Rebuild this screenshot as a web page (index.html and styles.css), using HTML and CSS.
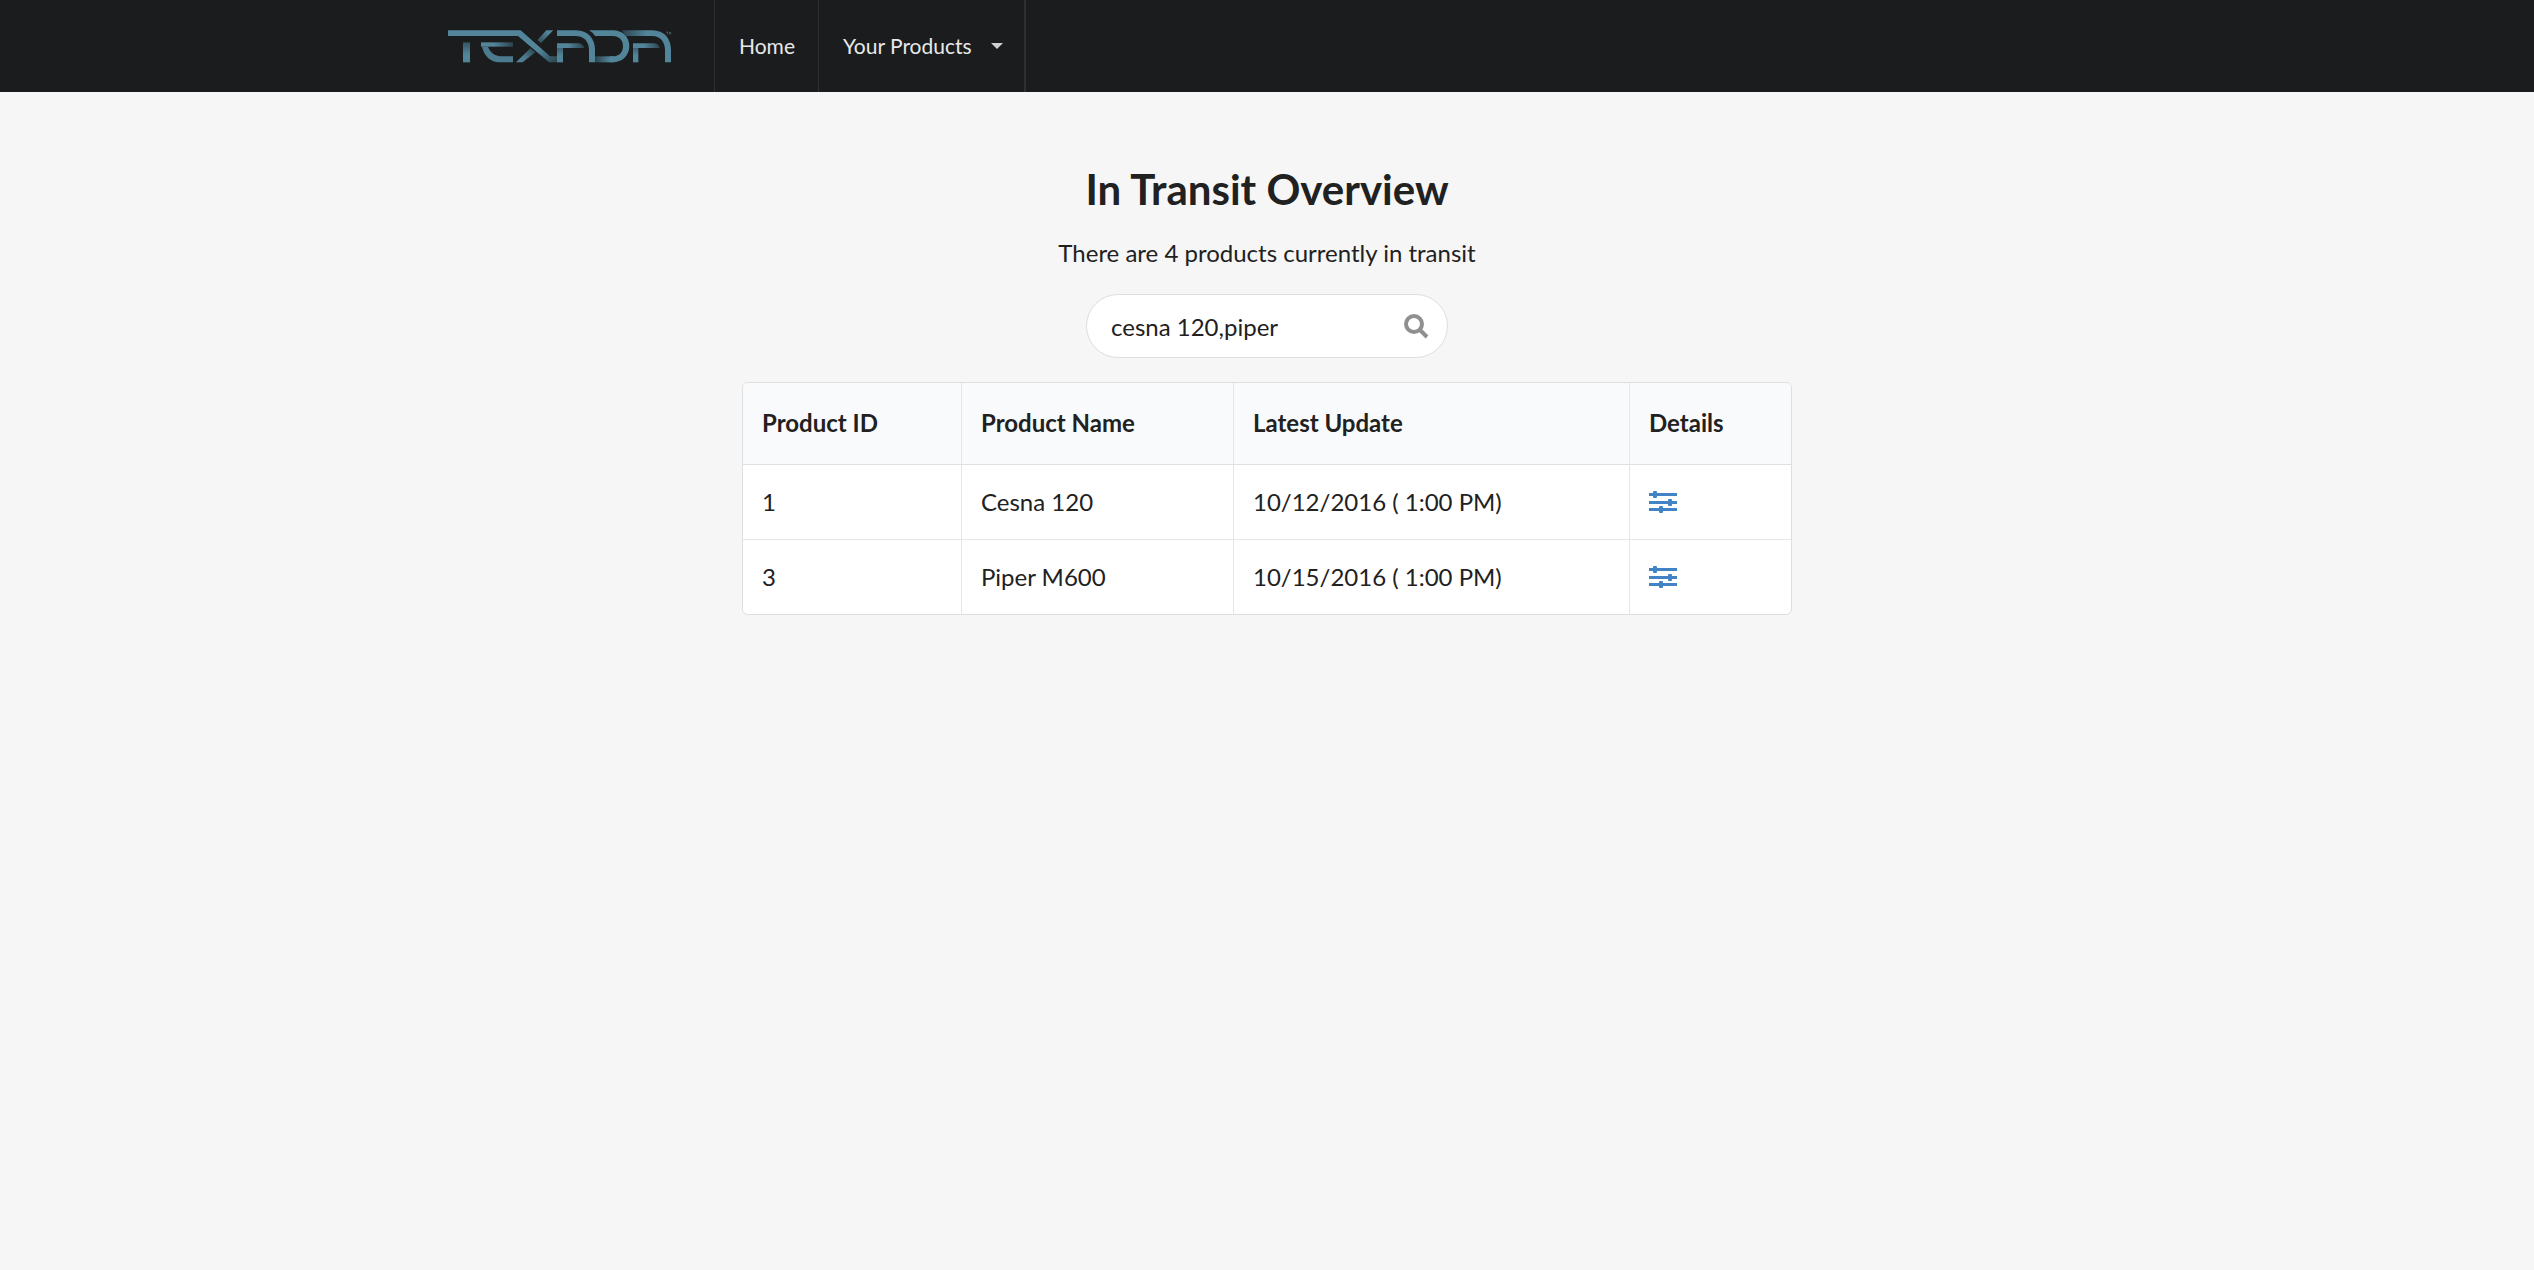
FILE: index.html
```html
<!DOCTYPE html>
<html lang="en">
<head>
<meta charset="utf-8">
<meta name="viewport" content="width=device-width, initial-scale=1">
<title>In Transit Overview</title>
<link rel="stylesheet" href="styles.css">
</head>
<body>
<header class="topbar">
  <nav class="menu" aria-label="Main">
    <a class="item brand" href="#" aria-label="Texada">
      <svg class="logo" viewBox="54 59 672 99" aria-hidden="true">
        <defs>
          <linearGradient id="down" x1="0" y1="0" x2="0" y2="1"><stop offset="0" stop-color="#355562"/><stop offset=".6" stop-color="#52849a"/></linearGradient>
          <linearGradient id="fadeRight" x1="0" y1="0" x2="1" y2="0"><stop offset=".4" stop-color="#52849a"/><stop offset="1" stop-color="#2c444e"/></linearGradient>
          <linearGradient id="fadeLeft" x1="0" y1="0" x2="1" y2="0"><stop offset="0" stop-color="#2b424b"/><stop offset=".8" stop-color="#52849a"/></linearGradient>
          <linearGradient id="cross" gradientUnits="userSpaceOnUse" x1="265" y1="60" x2="370" y2="157"><stop offset=".6" stop-color="#52849a"/><stop offset="1" stop-color="#2f4a55"/></linearGradient>
          <linearGradient id="rise" gradientUnits="userSpaceOnUse" x1="260" y1="156" x2="368" y2="60"><stop offset="0" stop-color="#52849a"/><stop offset=".2" stop-color="#4c7b8f"/><stop offset=".45" stop-color="#2b4751"/><stop offset=".65" stop-color="#35535f"/><stop offset=".9" stop-color="#52849a"/></linearGradient>
        </defs>
        <path fill="url(#down)" d="M99 96h21v60H99z"/>
        <path fill="url(#fadeRight)" d="M153 96h96v13h-96z"/>
        <path fill="#4c7b8f" d="M156 109h18q8 24 34 29h41v18h-45q-38-6-48-47z"/>
        <path fill="url(#rise)" d="M258 156L301 114l15 12-38 30zM322 89L349 60h21l-37 38z"/>
        <path fill="url(#cross)" d="M54 60h218l88 78h22v18h-25L264 77H54z"/>
        <path fill="#52849a" d="M381 60h57c36 0 57 25 57 58v38h-18v-37c0-25-15-42-40-42h-56z"/>
        <path fill="url(#down)" d="M381 105h18v51h-18z"/>
        <path fill="url(#fadeRight)" d="M381 99h65q13 2 17 14h-82z"/>
        <path fill="url(#fadeLeft)" d="M575 60h92v17h-80z"/>
        <path fill="#52849a" d="M477 60h71c30 0 50 20 50 47 0 28-21 49-50 49h-8v-18h8c20 0 31-13 31-31 0-17-12-30-31-30h-53q-4-9-18-17z"/>
        <path fill="url(#fadeLeft)" d="M495 138h56v18h-56z"/>
        <path fill="#52849a" d="M666 60h1c36 0 56 25 56 58v38h-18v-37c0-25-15-42-39-42z"/>
        <path fill="url(#down)" d="M609 105h16v51h-16z"/>
        <path fill="url(#fadeRight)" d="M609 99h64q13 2 17 14h-81z"/>
        <path fill="none" stroke="#52727e" stroke-width="2" d="M709 65h6M712 65v7M718 72v-6l2 3 2-3v6"/>
      </svg>
    </a>
    <a class="item" href="#">Home</a>
    <button class="item dropdown" type="button" aria-haspopup="true">Your Products
      <svg class="caret" viewBox="0 0 12 6" aria-hidden="true"><path d="M0 0h12L6 6z"/></svg>
    </button>
  </nav>
</header>

<main class="page">
  <h1>In Transit Overview</h1>
  <p class="summary">There are 4 products currently in transit</p>
  <form class="search" role="search">
    <input type="text" aria-label="Search products" value="cesna 120,piper">
    <svg class="search-icon" viewBox="0 0 26 26" aria-hidden="true"><circle cx="10" cy="10" r="8"/><path d="M16 16l7 7"/></svg>
  </form>
  <table class="products">
    <colgroup><col class="col-id"><col class="col-name"><col class="col-update"><col></colgroup>
    <thead>
      <tr><th scope="col">Product ID</th><th scope="col">Product Name</th><th scope="col">Latest Update</th><th scope="col">Details</th></tr>
    </thead>
    <tbody>
      <tr>
        <td>1</td><td>Cesna 120</td><td>10/12/2016 ( 1:00 PM)</td>
        <td><a class="details" href="#" aria-label="Details for Cesna 120"><svg viewBox="0 0 28 22" aria-hidden="true"><path d="M0 2h28v3H0zM0 10h28v3H0zM0 17h28v3H0z"/><rect x="4" y="0" width="4" height="7" rx="1"/><rect x="19" y="8" width="4" height="7" rx="1"/><rect x="10" y="15" width="4" height="7" rx="1"/></svg></a></td>
      </tr>
      <tr>
        <td>3</td><td>Piper M600</td><td>10/15/2016 ( 1:00 PM)</td>
        <td><a class="details" href="#" aria-label="Details for Piper M600"><svg viewBox="0 0 28 22" aria-hidden="true"><path d="M0 2h28v3H0zM0 10h28v3H0zM0 17h28v3H0z"/><rect x="4" y="0" width="4" height="7" rx="1"/><rect x="19" y="8" width="4" height="7" rx="1"/><rect x="10" y="15" width="4" height="7" rx="1"/></svg></a></td>
      </tr>
    </tbody>
  </table>
</main>
</body>
</html>
```
FILE: styles.css
```css
* { box-sizing: border-box; }

body {
  margin: 0;
  min-height: 100vh;
  background: #f6f6f6;
  color: #212121;
  font: 24px/34px Lato, "Liberation Sans", sans-serif;
}

.topbar { background: #1b1c1d; }

.menu {
  display: flex;
  max-width: 1690px;
  min-height: 92px;
  margin: 0 auto;
}

.item {
  display: flex;
  align-items: center;
  padding: 0 23px 0 24px;
  border: 0;
  border-right: 1px solid #2e2f30;
  background: none;
  color: #e8e8e8;
  font: inherit;
  font-size: 21px;
  text-decoration: none;
}

.brand { padding: 0 42px 0 26px; }
.logo { display: block; width: 224px; height: 33px; }
.dropdown { padding-right: 21px; border-right-width: 2px; }
.caret { width: 12px; height: 6px; margin-left: 19px; fill: #d0d0d0; }

.page {
  display: flex;
  flex-direction: column;
  align-items: center;
  padding: 70px 24px;
}

h1 {
  margin: 0;
  font-size: 42px;
  line-height: 54px;
}

.summary { margin: 20px 0 24px; }

.search {
  position: relative;
  width: 362px;
  max-width: 100%;
  margin-bottom: 24px;
}

.search input {
  display: block;
  width: 100%;
  height: 64px;
  padding: 0 64px 0 24px;
  border: 1px solid #dededf;
  border-radius: 32px;
  background: #fff;
  color: #212121;
  font: inherit;
  outline: 0;
}

.search-icon {
  position: absolute;
  top: 20px;
  right: 18px;
  width: 26px;
  height: 26px;
  fill: none;
  stroke: #909090;
  stroke-width: 4;
}

.products {
  width: 100%;
  max-width: 1050px;
  border: 1px solid #dededf;
  border-radius: 6px;
  border-spacing: 0;
  background: #fff;
  table-layout: fixed;
  text-align: left;
  overflow: hidden;
}

.col-id { width: 218px; }
.col-name { width: 272px; }
.col-update { width: 396px; }

.products th,
.products td {
  padding: 20px 19px;
  border-left: 1px solid #e6e6e7;
}

.products th {
  padding: 23px 19px 24px;
  border-bottom: 1px solid #dfe0e2;
  background: #f9fafb;
  font-weight: 700;
}

.products th:first-child,
.products td:first-child { border-left: 0; }
.products tr + tr td { border-top: 1px solid #e6e6e7; }

.details { display: flex; align-items: center; height: 34px; }
.details svg { width: 28px; height: 22px; fill: #4183c4; }
```
